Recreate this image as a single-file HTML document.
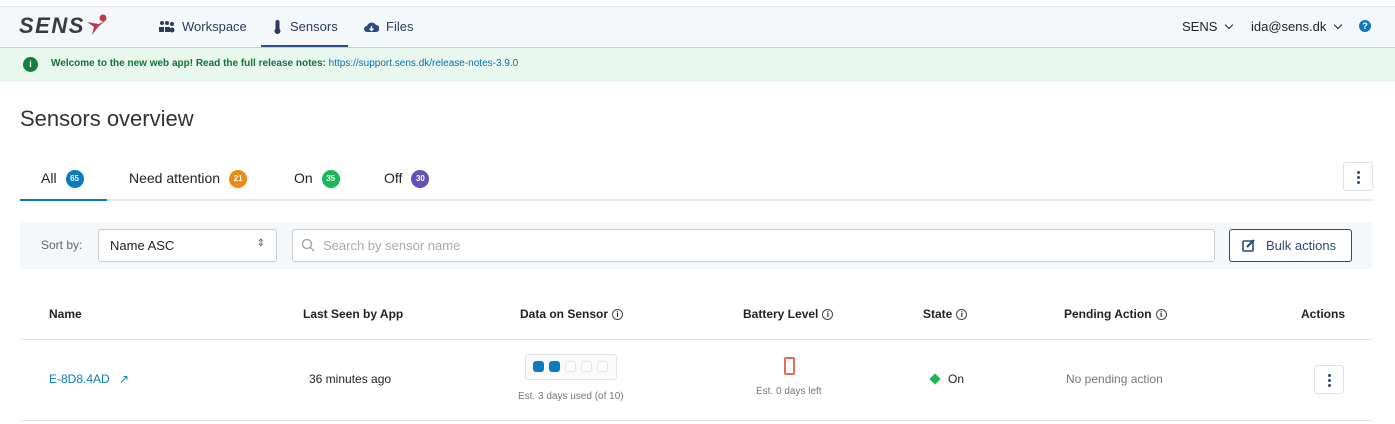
<!DOCTYPE html>
<html><head><style>
*{box-sizing:border-box;margin:0;padding:0}
body{width:1395px;height:424px;background:#fff;font-family:"Liberation Sans",sans-serif;color:#222;position:relative;overflow:hidden;font-size:13px}
.a{position:absolute}
.nav{left:0;top:6px;width:1395px;height:41px;background:#f4f8fb;border-top:1px solid #e2e4e6}
.nl{font-size:13px;color:#2d3a5a;top:14px}
.ban{left:0;top:47px;width:1395px;height:35px;background:#e8f8ee;border-top:1px solid #a6e4b8}
.badge{display:inline-block;width:18px;height:18px;border-radius:9px;color:#fff;font-size:8px;font-weight:bold;text-align:center;line-height:18px;vertical-align:middle;margin-left:9px}
.tab{top:170px;font-size:14px;color:#222}
.th{top:307px;font-size:12px;font-weight:bold;color:#222}
.ic{display:inline-block;width:11px;height:11px;border:1px solid #444;border-radius:50%;font-size:8px;text-align:center;line-height:9px;vertical-align:middle;margin-left:4px;font-weight:bold}
.dots{width:30px;height:29px;border:1px solid #dde0e4;border-radius:3px;background:#fff}
.dots i{position:absolute;left:13px;width:3px;height:3px;border-radius:2px;background:#2d4a7a}
.chev{display:inline-block;width:6px;height:6px;border-right:1.6px solid #222;border-bottom:1.6px solid #222;transform:rotate(45deg);margin-left:9px;vertical-align:3px}
</style></head><body>
<div class="a nav"></div>
<div class="a" style="left:19px;top:13px;font-size:22px;font-weight:900;font-style:italic;color:#3a3a3a;letter-spacing:1.5px">SENS</div>
<svg class="a" style="left:86px;top:14px" width="24" height="22"><circle cx="17" cy="4" r="3.5" fill="#c0394b"/><path d="M1 8 L8 13 L6 21 L12 13 L20 6 L13 10 Z" fill="#c0394b"/></svg>
<svg class="a" style="left:159px;top:21px" width="16" height="12"><circle cx="3" cy="2" r="2" fill="#2d3a5a"/><circle cx="8" cy="2" r="2" fill="#2d3a5a"/><circle cx="13" cy="3" r="2" fill="#2d3a5a"/><rect x="0" y="6" width="5" height="5" fill="#2d3a5a"/><rect x="6" y="6" width="5" height="5" fill="#2d3a5a"/><circle cx="13" cy="9" r="2.5" fill="#2d3a5a"/></svg>
<div class="a nl" style="left:182px;top:19px">Workspace</div>
<svg class="a" style="left:274px;top:20px" width="7" height="14"><rect x="1.5" y="0" width="4" height="10" rx="2" fill="#2d3a5a"/><circle cx="3.5" cy="11" r="3" fill="#2d3a5a"/></svg>
<div class="a nl" style="left:290px;top:19px">Sensors</div>
<div class="a" style="left:261px;top:45px;width:87px;height:2px;background:#2d4a8a"></div>
<svg class="a" style="left:364px;top:21px" width="15" height="12"><path d="M3 11 A3 3 0 0 1 3 5 A5 5 0 0 1 12 4 A3.5 3.5 0 0 1 12 11 Z" fill="#2d4a7a"/><path d="M7.5 5 V9 M5.5 7.5 L7.5 9.5 L9.5 7.5" stroke="#fff" stroke-width="1.3" fill="none"/></svg>
<div class="a nl" style="left:386px;top:19px">Files</div>
<div class="a nl" style="left:1182px;top:19px;color:#222">SENS<span class="chev"></span></div>
<div class="a nl" style="left:1251px;top:19px;color:#222">ida@sens.dk<span class="chev"></span></div>
<div class="a" style="left:1359px;top:20px;width:12px;height:12px;border-radius:6px;background:#0b7bbf;color:#fff;font-size:9px;font-weight:bold;text-align:center;line-height:12px">?</div>
<div class="a ban"></div>
<div class="a" style="left:23px;top:57px;width:15px;height:15px;border-radius:8px;background:#14803c;color:#fff;font-size:9px;font-weight:bold;text-align:center;line-height:15px">i</div>
<div class="a" style="left:51px;top:58px;font-size:10px;color:#14703c;font-weight:bold">Welcome to the new web app! Read the full release notes: <span style="font-weight:normal;color:#0b6ea8">https://support.sens.dk/release-notes-3.9.0</span></div>
<div class="a" style="left:20px;top:106px;font-size:22px;color:#333">Sensors overview</div>
<div class="a tab" style="left:41px">All<span class="badge" style="background:#0b7bbf">65</span></div>
<div class="a tab" style="left:129px">Need attention<span class="badge" style="background:#ea8a10">21</span></div>
<div class="a tab" style="left:294px">On<span class="badge" style="background:#18b856">35</span></div>
<div class="a tab" style="left:384px">Off<span class="badge" style="background:#6050b8">30</span></div>
<div class="a" style="left:20px;top:199px;width:1353px;height:2px;background:#e8e8e8"></div>
<div class="a" style="left:20px;top:199px;width:87px;height:2px;background:#0b7bbf"></div>
<div class="a dots" style="left:1343px;top:162px"><i style="top:8px"></i><i style="top:13px"></i><i style="top:18px"></i></div>
<div class="a" style="left:20px;top:222px;width:1353px;height:47px;background:#f4f8fb;border-radius:4px"></div>
<div class="a" style="left:41px;top:238px;font-size:12px;color:#666">Sort by:</div>
<div class="a" style="left:98px;top:229px;width:179px;height:33px;border:1px solid #ccc;border-radius:3px;background:#fff;font-size:13px;padding:8px 11px">Name ASC<span style="position:absolute;right:11px;top:8px;font-size:10px;color:#555">⇕</span></div>
<div class="a" style="left:292px;top:229px;width:923px;height:33px;border:1px solid #ccc;border-radius:3px;background:#fff;font-size:13px;padding:8px 30px;color:#aaa">Search by sensor name</div>
<svg class="a" style="left:301px;top:238px" width="14" height="14"><circle cx="6" cy="6" r="4.5" stroke="#aaa" stroke-width="1.5" fill="none"/><path d="M9.5 9.5 L13 13" stroke="#aaa" stroke-width="1.5"/></svg>
<div class="a" style="left:1229px;top:229px;width:123px;height:33px;border:1px solid #2d4a7a;border-radius:3px;background:#fff;font-size:13px;padding:8px 0 0 36px;color:#2d4a7a">Bulk actions</div>
<svg class="a" style="left:1242px;top:238px" width="14" height="14"><rect x="1" y="3" width="10" height="10" rx="1" stroke="#2d4a7a" stroke-width="1.6" fill="none"/><path d="M5 9 L12 2" stroke="#2d4a7a" stroke-width="2.2"/></svg>
<div class="a th" style="left:49px">Name</div>
<div class="a th" style="left:303px">Last Seen by App</div>
<div class="a th" style="left:520px">Data on Sensor<span class="ic">i</span></div>
<div class="a th" style="left:743px">Battery Level<span class="ic">i</span></div>
<div class="a th" style="left:923px">State<span class="ic">i</span></div>
<div class="a th" style="left:1064px">Pending Action<span class="ic">i</span></div>
<div class="a th" style="left:1301px">Actions</div>
<div class="a" style="left:20px;top:339px;width:1353px;height:1px;background:#e4e4e4"></div>
<div class="a" style="left:49px;top:372px;font-size:12px;color:#0b7bbf">E-8D8.4AD <span style="margin-left:6px">↗</span></div>
<div class="a" style="left:309px;top:372px;font-size:12px">36 minutes ago</div>
<div class="a" style="left:525px;top:354px;width:92px;height:26px;border:1px solid #e2e2e2;border-radius:3px;background:#fafafa"></div>
<div class="a" style="left:533px;top:361px;width:11px;height:11px;border-radius:3px;background:#0b7bbf"></div>
<div class="a" style="left:549px;top:361px;width:11px;height:11px;border-radius:3px;background:#0b7bbf"></div>
<div class="a" style="left:565px;top:361px;width:11px;height:11px;border-radius:3px;border:1px solid #e6e6e6;background:#fff"></div>
<div class="a" style="left:581px;top:361px;width:11px;height:11px;border-radius:3px;border:1px solid #e6e6e6;background:#fff"></div>
<div class="a" style="left:597px;top:361px;width:11px;height:11px;border-radius:3px;border:1px solid #e6e6e6;background:#fff"></div>
<div class="a" style="left:518px;top:391px;font-size:10px;color:#777">Est. 3 days used (of 10)</div>
<div class="a" style="left:784px;top:357px;width:11px;height:18px;border:2px solid #e86a5a;border-radius:2px"></div>
<div class="a" style="left:756px;top:386px;font-size:10px;color:#777">Est. 0 days left</div>
<div class="a" style="left:931px;top:375px;width:8px;height:8px;background:#18b856;transform:rotate(45deg)"></div>
<div class="a" style="left:948px;top:372px;font-size:12px">On</div>
<div class="a" style="left:1066px;top:372px;font-size:12px;color:#777">No pending action</div>
<div class="a dots" style="left:1314px;top:365px"><i style="top:8px"></i><i style="top:13px"></i><i style="top:18px"></i></div>
<div class="a" style="left:20px;top:420px;width:1353px;height:1px;background:#e4e4e4"></div>
</body></html>
